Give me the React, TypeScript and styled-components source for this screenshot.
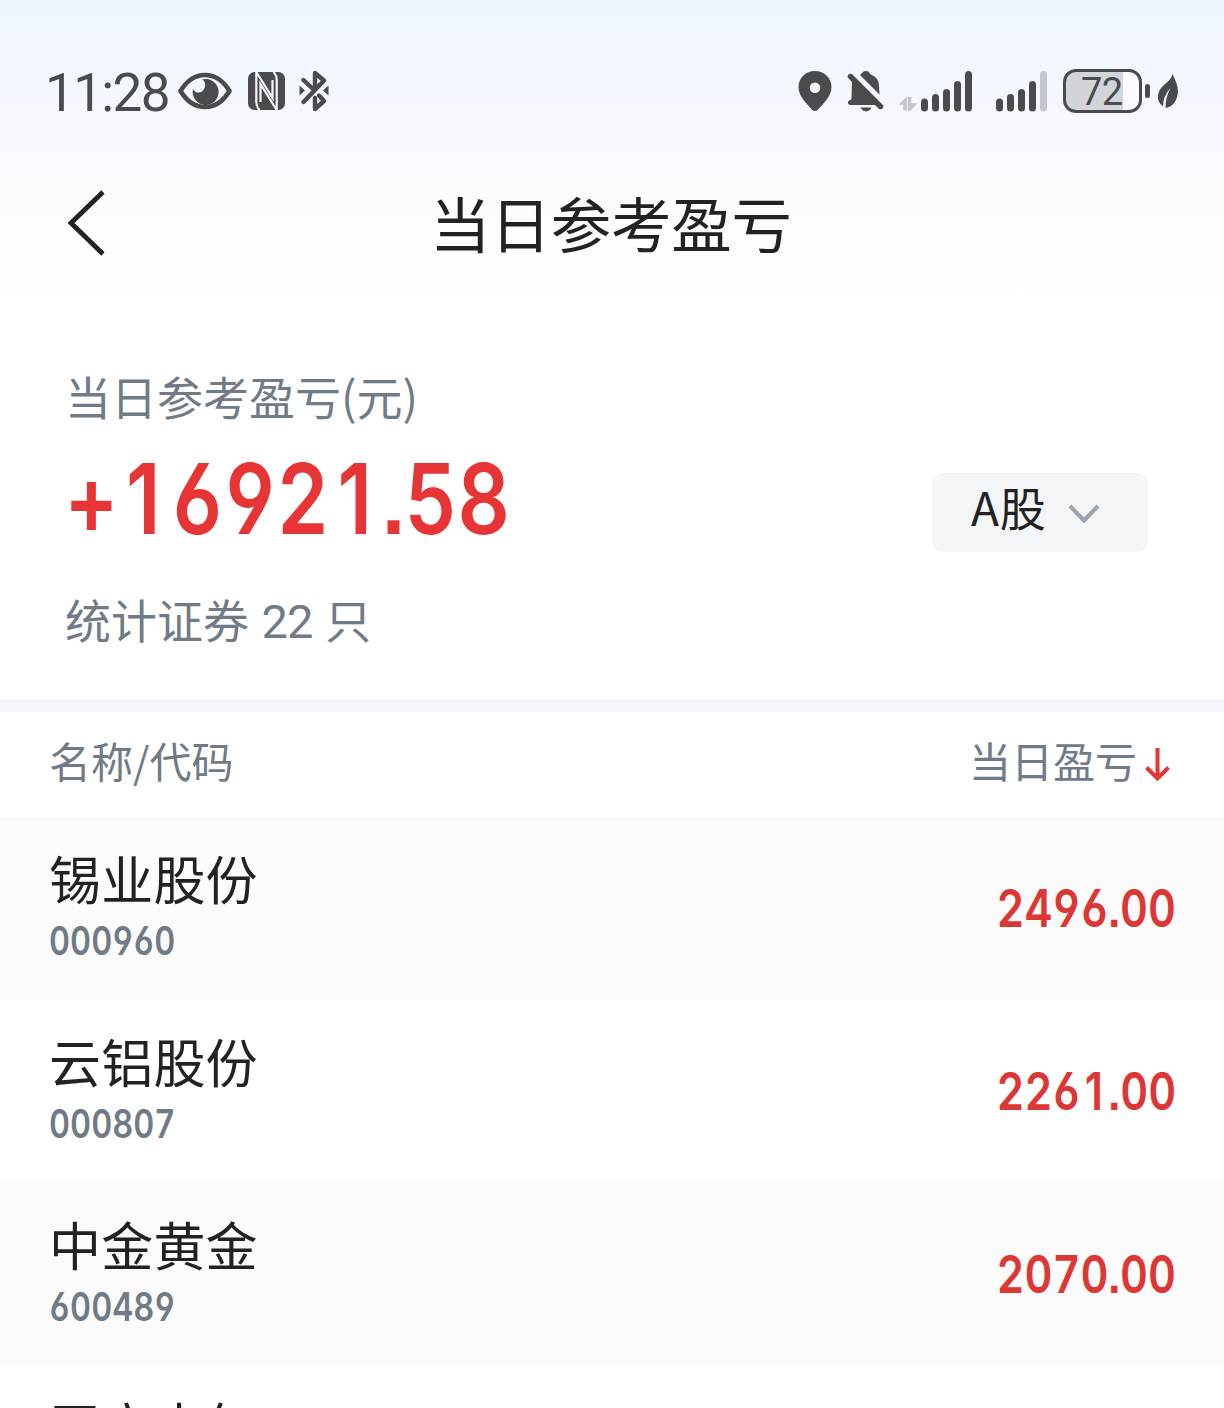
import React from 'react';
import styled, { createGlobalStyle } from 'styled-components';

const ink = '#222222';
const muted = '#707b86';
const system = '#4a4b4d';

const GlobalStyle = createGlobalStyle`
  body { margin: 0; background: #fff; }
  * { box-sizing: border-box; }
`;

const Screen = styled.main`
  width: 1224px;
  height: 1408px;
  overflow: hidden;
  display: flex;
  flex-direction: column;
  color: ${ink};
  font-family: 'Noto Sans CJK SC', sans-serif;
  background: linear-gradient(180deg, #eff5ff 0, #f4f8fe 100px, #fbfcff 210px, #ffffff 300px);
`;

const StatusBar = styled.header`
  height: 150px;
  flex: none;
  padding: 31px 45px 0 45px;
  display: flex;
  justify-content: space-between;
  align-items: center;
`;

const StatusGroup = styled.div`
  display: flex;
  align-items: center;
  height: 60px;
`;

const Clock = styled.time`
  width: 133px;
  font: 400 53px/60px Roboto, sans-serif;
  letter-spacing: -1.6px;
  color: ${system};
  white-space: nowrap;
  padding-top: 4px;
`;

const Glyph = styled.svg<{ $left?: number; $drop?: number }>`
  display: block;
  flex: none;
  margin-left: ${p => p.$left ?? 0}px;
  margin-top: ${p => p.$drop ?? 0}px;
`;

const Battery = styled.div`
  width: 79px;
  height: 44px;
  margin-left: 16px;
  border: 3.5px solid ${system};
  border-radius: 13px;
  background: linear-gradient(90deg, #d1d4d9 57px, #fafcff 57px);
  font: 400 38px/41px Roboto, sans-serif;
  color: ${system};
  padding-left: 15px;
  letter-spacing: -0.5px;
`;

const NavBar = styled.nav`
  height: 144px;
  flex: none;
  display: grid;
  grid-template-columns: 160px 1fr 160px;
  align-items: center;
  padding: 0 0 4px;
`;

const BackButton = styled.button`
  border: 0;
  background: none;
  padding: 6px 0 0 67px;
  height: 80px;
`;

const Title = styled.h1`
  margin: 3px 2px 0 0;
  font-size: 60.5px;
  letter-spacing: -0.2px;
  line-height: 80px;
  font-weight: 400;
  text-align: center;
`;

const Summary = styled.section`
  height: 405px;
  flex: none;
  display: flex;
  justify-content: space-between;
  padding: 0 76px 0 65px;
`;

const SummaryText = styled.div`
  padding-top: 71px;
`;

const Caption = styled.p<{ $top?: number }>`
  margin: ${p => p.$top ?? 0}px 0 0;
  font-size: 46px;
  line-height: 60px;
  color: ${muted};
`;

const Count = styled.span`
  font-family: Roboto, sans-serif;
  font-size: 47px;
  letter-spacing: -0.8px;
  margin: 0 12.5px;
`;

const FigureBox = styled.div<{ $size: number; $line: number; $weight?: number; $end?: boolean }>`
  font-family: Inter, sans-serif;
  font-feature-settings: 'tnum', 'cv03', 'cv04', 'ss07';
  font-size: ${p => p.$size}px;
  line-height: ${p => p.$line}px;
  font-weight: ${p => p.$weight ?? 570};
  white-space: nowrap;
  transform: scaleX(0.835);
  transform-origin: ${p => (p.$end ? 'right' : 'left')};
`;

/* The tabular "1" carries a foot serif, so it takes the proportional form in a digit-wide cell. */
const PlainOne = styled.span`
  display: inline-block;
  width: 0.65em;
  text-align: center;
  text-indent: -0.03em;
  font-feature-settings: 'ss07';
`;

const Total = styled(FigureBox)`
  color: #e63534;
  margin-top: 24px;
`;

const MarketPicker = styled.button`
  width: 216px;
  height: 79px;
  margin-top: 179px;
  border: 0;
  border-radius: 12px;
  background: #f3f5f7;
  display: flex;
  align-items: center;
  padding: 0 0 13px 39px;
  font: 400 46px/60px 'Noto Sans CJK SC', sans-serif;
  letter-spacing: 0.8px;
  color: ${ink};
`;

const Divider = styled.div`
  height: 13px;
  flex: none;
  background: #f4f5fa;
`;

const ColumnHead = styled.div`
  height: 105px;
  flex: none;
  display: flex;
  justify-content: space-between;
  align-items: center;
  padding: 0 54px 9px 49px;
  font-size: 42px;
  line-height: 60px;
  color: ${muted};
`;

const SortLabel = styled.span`
  display: flex;
  align-items: center;
`;

const Row = styled.div`
  height: 183px;
  flex: none;
  display: flex;
  justify-content: space-between;
  padding: 0 48px 0 49px;
  &:nth-child(odd) { background: #fbfbfb; }
`;

const Stock = styled.div`
  padding-top: 31px;
  ${Row}:last-child & { padding-top: 29px; }
`;

const Name = styled.div`
  font-size: 52px;
  line-height: 60px;
  letter-spacing: 0.2px;
`;

const Code = styled(FigureBox)`
  color: ${muted};
  margin-top: 13px;
`;

const Profit = styled(FigureBox)`
  color: #dd3735;
  align-self: center;
  padding-bottom: 2px;
`;

const stocks = [
  { name: '锡业股份', code: '000960', profit: '2496.00' },
  { name: '云铝股份', code: '000807', profit: '2261.00' },
  { name: '中金黄金', code: '600489', profit: '2070.00' },
  { name: '平高电气', code: '', profit: '' },
];

function digits(value: string) {
  return value.split(/(1)/).map((part, i) => (part === '1' ? <PlainOne key={i}>1</PlainOne> : part));
}

function Signal({ faded }: { faded?: boolean }) {
  const tops = [28.5, 24, 19, 11, 1];
  return (
    <>
      {tops.map((t, i) => (
        <rect key={i} x={i * 11} y={t} width="7" height={41.5 - t} rx="3.5" fill={faded && i === 4 ? '#c3c6ca' : system} />
      ))}
    </>
  );
}

export default function App() {
  return (
    <Screen>
      <GlobalStyle />
      <StatusBar>
        <StatusGroup>
          <Clock>11:28</Clock>
          <Glyph width="54" height="38" viewBox="0 0 54 38">
            <path d="M2.5 19C8 10 16.5 3 27 3s19 7 24.500 16C46 28 37.500 35 27 35S8 28 2.500 19z" fill="none" stroke={system} strokeWidth="4.6" strokeLinejoin="round" />
            <path d="M24 7.500A13 13 0 1 1 15 17a6 6 0 0 0 4 3.500 7.300 7.300 0 0 0 8.200-7.500C27 10 26 8.500 24 7.500z" fill={system} />
          </Glyph>
          <Glyph $left={16} width="37" height="38" viewBox="0 0 37 38">
            <rect width="37" height="38" rx="6.500" fill={system} />
            <path d="M8.300 0V30Q8.300 35 11.500 38M25.500 0Q28.700 3 28.700 8V38M8.300 0L24.500 26V8M28.700 38L12.500 12V30" fill="none" stroke="#f4f8fe" strokeWidth="2.2" />
          </Glyph>
          <Glyph $left={14} width="32" height="42" viewBox="0 0 32 42">
            <g fill="none" stroke={system} strokeWidth="4.400" strokeLinecap="round" strokeLinejoin="round">
              <path d="M4.500 10L14 19M4.500 32L25 10.500 16 3V18" />
              <path d="M16 28V39L25 31 20 25.500" />
            </g>
            <path d="M.5 15.500L6 20.500 .5 25.500zM29.500 15.500L24 20.500 29.500 25.500z" fill={system} />
          </Glyph>
        </StatusGroup>
        <StatusGroup>
          <Glyph width="34" height="42" viewBox="0 0 34 42">
            <path fillRule="evenodd" d="M17 1C7.500 1 .5 8 .5 17c0 8 5.500 14 13.500 22.500q3 3 6 0C28 31 33.500 25 33.500 17 33.500 8 26.500 1 17 1zm0 11.500a5.300 5.300 0 1 1 0 10.600 5.300 5.300 0 0 1 0-10.600z" fill={system} />
          </Glyph>
          <Glyph $left={15} width="37" height="42" viewBox="0 0 37 42">
            <path d="M3.500 6.500L33.500 36.500" stroke={system} strokeWidth="5.400" strokeLinecap="round" />
            <path d="M5 9L29 33V35H3Q.5 34.500 1 31.500L4.500 29zM13 5Q15 3.500 16 2q3-2 6 0l1 2C30 7 32 11 32 16l.5 8.500z" fill={system} />
            <path d="M13.500 37.500H24.500Q23 41 19 41.500 15 41 13.500 37.500z" fill={system} />
          </Glyph>
          <Glyph $left={15} $drop={27} width="18" height="14" viewBox="0 0 18 14">
            <path d="M7.500 0V13H4.500V7.500H0zM9 0H12V6.500H18L11.500 13.500H9z" fill="#c3c6ca" stroke="#c3c6ca" strokeWidth=".6" />
          </Glyph>
          <Glyph $left={4} width="51" height="42" viewBox="0 0 51 42"><Signal /></Glyph>
          <Glyph $left={24} width="51" height="42" viewBox="0 0 51 42"><Signal faded /></Glyph>
          <Battery>72</Battery>
          <Glyph $left={3} width="5" height="14"><rect width="5" height="14" rx="2.5" fill={system} /></Glyph>
          <Glyph $left={7} width="22" height="36" viewBox="0 0 22 36">
            <path d="M15.500 1C20 10 22.500 17 20 24 18 31 14 34 8.500 35Q8.500 24 13.500 15 6 23 6 33.500C1 30 0 25 1.500 20 3.500 12 14 9 15.500 1z" fill={system} />
          </Glyph>
        </StatusGroup>
      </StatusBar>

      <NavBar>
        <BackButton aria-label="返回">
          <Glyph width="40" height="66" viewBox="0 0 40 66">
            <path d="M36 2L4 33 36 64" fill="none" stroke={ink} strokeWidth="4.800" />
          </Glyph>
        </BackButton>
        <Title>当日参考盈亏</Title>
      </NavBar>

      <Summary>
        <SummaryText>
          <Caption>当日参考盈亏(元)</Caption>
          <Total $size={97.8} $line={100}>{digits('+16921.58')}</Total>
          <Caption $top={39}>统计证券<Count>22</Count>只</Caption>
        </SummaryText>
        <MarketPicker>
          A股
          <Glyph $left={21} $drop={15} width="32" height="22" viewBox="0 0 32 22">
            <path d="M2 3L16 17.500 30 3" fill="none" stroke="#9aa4ae" strokeWidth="4" />
          </Glyph>
        </MarketPicker>
      </Summary>

      <Divider />

      <ColumnHead>
        <span>名称/代码</span>
        <SortLabel>
          当日盈亏
          <Glyph $left={8} $drop={10} width="25" height="34" viewBox="0 0 25 34">
            <path d="M12.500 0V30M1.500 19.500L12.500 30.500 23.500 19.500" fill="none" stroke="#e63534" strokeWidth="4" />
          </Glyph>
        </SortLabel>
      </ColumnHead>

      <div>
        {stocks.map(s => (
          <Row key={s.name}>
            <Stock>
              <Name>{s.name}</Name>
              <Code $size={39} $line={40} $weight={570}>{digits(s.code)}</Code>
            </Stock>
            <Profit $size={51.8} $line={60} $end>{digits(s.profit)}</Profit>
          </Row>
        ))}
      </div>
    </Screen>
  );
}
